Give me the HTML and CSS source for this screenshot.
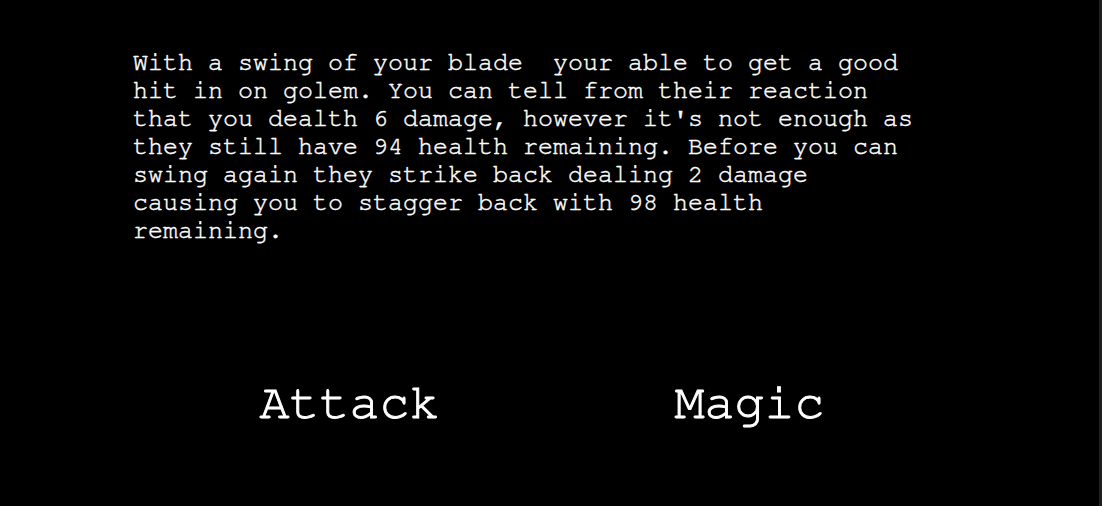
FILE: index.html
```html
<!DOCTYPE html>
<html lang="en">
<head>
<meta charset="utf-8">
<title>Battle</title>
<link rel="stylesheet" href="styles.css">
</head>
<body>
<main class="screen">
  <p class="story">With a swing of your blade  your able to get a good hit in on golem. You can tell from their reaction that you dealth 6 damage, however it's not enough as they still have 94 health remaining. Before you can swing again they strike back dealing 2 damage causing you to stagger back with 98 health remaining.</p>
  <div class="actions">
    <button class="action">Attack</button>
    <button class="action">Magic</button>
  </div>
</main>
</body>
</html>
```
FILE: styles.css
```css
html, body {
  margin: 0;
  padding: 0;
  background: #000;
}
.screen {
  box-sizing: border-box;
  width: 1102px;
  height: 506px;
  background: #000;
  border-right: 3px solid #1f1f1f;
  font-family: "Nimbus Mono PS", "Nimbus Mono L", "FreeMono", "Courier 10 Pitch", "Courier", "Liberation Mono", monospace;
  color: #fff;
  padding-top: 49px;
}
.story {
  margin: 0 0 0 133px;
  width: 788px;
  font-size: 25px;
  line-height: 28px;
  white-space: pre-wrap;
  -webkit-text-stroke: 0.45px #fff;
}
.actions {
  display: flex;
  justify-content: center;
  margin-top: 133px;
}
.action {
  width: 400px;
  padding: 0;
  border: 0;
  background: transparent;
  color: #fff;
  font-family: inherit;
  font-size: 50px;
  line-height: normal;
  -webkit-text-stroke: 0.9px #fff;
}
```
